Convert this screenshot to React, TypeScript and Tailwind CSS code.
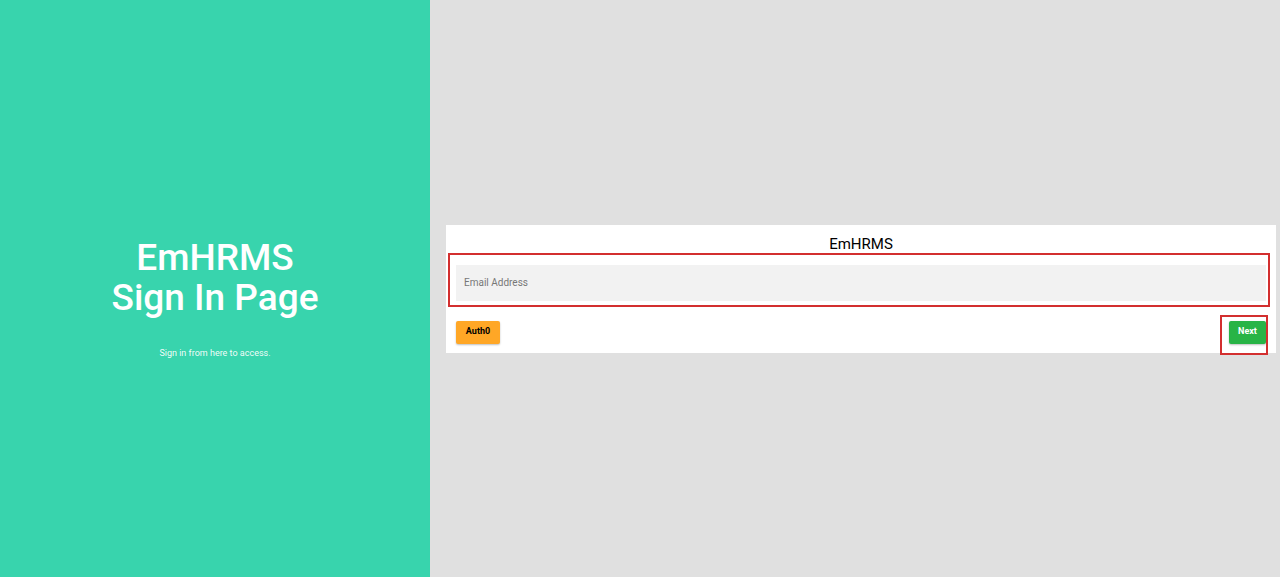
import React from 'react';

// ─── Left hero panel ───────────────────────────────────────────────────────────

const Hero: React.FC = () => (
  <div className="w-[430px] h-full bg-[#38d4ad] flex flex-col items-center justify-center pt-[20px] text-white">
    <h1 className="text-[37px] leading-[40px] font-medium text-center">
      EmHRMS
      <br />
      Sign In Page
    </h1>
    <p className="mt-[29px] text-[9px] leading-[12px] text-white/95">Sign in from here to access.</p>
  </div>
);

// ─── Sign-in card ──────────────────────────────────────────────────────────────

const SignInCard: React.FC = () => (
  <div className="relative bg-white px-[10px] pt-[9px] pb-[9px]">
    <h2 className="text-center text-[15px] leading-[20px] text-black">EmHRMS</h2>
    <input
      type="email"
      placeholder="Email Address"
      className="mt-[11px] w-full h-[36px] bg-[#f2f2f2] px-[8px] text-[10px] text-[#444] placeholder:text-[#777] outline-none"
    />
    <div className="mt-[20px] flex items-center justify-between">
      <button className="h-[23px] w-[44px] rounded-[2px] bg-[#ffa726] text-[9px] font-bold text-black shadow-[0_1px_2px_rgba(0,0,0,0.25)]">
        Auth0
      </button>
      <button className="h-[23px] w-[37px] rounded-[2px] bg-[#28b446] text-[9px] font-bold text-white shadow-[0_1px_2px_rgba(0,0,0,0.25)]">
        Next
      </button>
    </div>

    {/* highlight annotations */}
    <div className="absolute left-[2px] top-[28px] w-[822px] h-[54px] border-2 border-[#d32f2f] pointer-events-none" />
    <div className="absolute left-[774px] top-[90px] w-[48px] h-[40px] border-2 border-[#d32f2f] pointer-events-none" />
  </div>
);

// ─── App ───────────────────────────────────────────────────────────────────────

export default function App() {
  return (
    <div
      className="flex w-[1280px] h-[577px] overflow-hidden"
      style={{ fontFamily: 'Roboto, "Liberation Sans", sans-serif' }}
    >
      <Hero />
      <div className="flex-1 bg-[#e0e0e0] flex flex-col justify-center pl-[16px] pr-[4px]">
        <SignInCard />
      </div>
    </div>
  );
}
